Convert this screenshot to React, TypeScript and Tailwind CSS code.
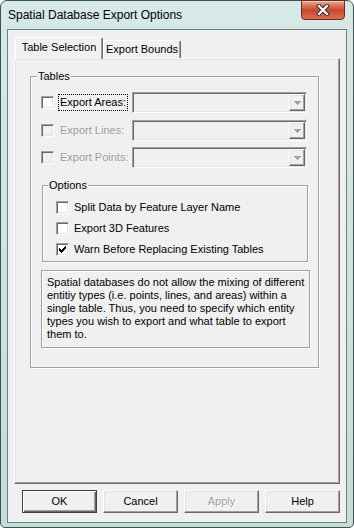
import React from 'react';

const raised =
  'border border-t-white border-l-white border-r-[#696969] border-b-[#696969] shadow-[inset_-1px_-1px_0_#a0a0a0,inset_1px_1px_0_#e3e3e3]';
const sunken =
  'border border-t-[#a0a0a0] border-l-[#a0a0a0] border-r-white border-b-white shadow-[inset_1px_1px_0_#696969,inset_-1px_-1px_0_#e3e3e3]';
const etched = 'border border-[#a0a0a0] shadow-[inset_1px_1px_0_#fff,1px_1px_0_#fff]';

function CheckBox({ checked = false, disabled = false }: { checked?: boolean; disabled?: boolean }) {
  return (
    <span
      className={`flex h-[13px] w-[13px] shrink-0 items-center justify-center ${sunken} ${
        disabled ? 'bg-[#f0f0f0]' : 'bg-white'
      }`}
    >
      {checked && (
        <svg width="7" height="7" viewBox="0 0 7 7" shapeRendering="crispEdges">
          <path
            fill="#000"
            d="M6 0h1v1h-1z M5 1h2v1h-2z M0 2h1v1h-1z M4 2h3v1h-3z M0 3h2v1h-2z M3 3h3v1h-3z M0 4h5v1h-5z M1 5h3v1h-3z M2 6h1v1h-1z"
          />
        </svg>
      )}
    </span>
  );
}

function Combo() {
  return (
    <div className={`flex h-[21px] w-[175px] shrink-0 justify-end bg-[#f0f0f0] p-px ${sunken}`}>
      <div className={`flex h-full w-[16px] items-center justify-center bg-[#f0f0f0] ${raised}`}>
        <svg width="7" height="4" viewBox="0 0 7 4" shapeRendering="crispEdges">
          <path fill="#a0a0a0" d="M0 0h7v1H0z M1 1h5v1H1z M2 2h3v1H2z M3 3h1v1H3z" />
        </svg>
      </div>
    </div>
  );
}

function TableRow({ label, enabled, focused }: { label: string; enabled: boolean; focused?: boolean }) {
  return (
    <div className="flex h-[21px] items-center">
      <div className="flex w-[101px] shrink-0 items-center pl-[10px]">
        <CheckBox disabled={!enabled} />
        <span
          className={`ml-[4px] flex h-[17px] items-center whitespace-nowrap px-[1px] ${
            focused ? 'border border-dotted border-black' : 'border border-transparent'
          } ${enabled ? 'text-black' : 'text-[#a0a0a0]'}`}
        >
          {label}
        </span>
      </div>
      <Combo />
    </div>
  );
}

function OptionRow({ label, checked }: { label: string; checked?: boolean }) {
  return (
    <div className="flex h-[17px] items-center pl-[13px]">
      <CheckBox checked={checked} />
      <span className="ml-[5px] whitespace-nowrap">{label}</span>
    </div>
  );
}

function Button({ label, primary, disabled }: { label: string; primary?: boolean; disabled?: boolean }) {
  return (
    <button
      className={`flex h-[23px] w-[75px] items-center justify-center bg-[#f0f0f0] ${
        primary
          ? 'border border-[#404040] shadow-[inset_1px_1px_0_#fff,inset_-1px_-1px_0_#696969,inset_-2px_-2px_0_#a0a0a0]'
          : raised
      } ${disabled ? 'text-[#a0a0a0] [text-shadow:1px_1px_0_#fff]' : 'text-black'}`}
    >
      {label}
    </button>
  );
}

export default function App() {
  return (
    <div className="h-[528px] w-[354px] overflow-hidden bg-white">
      <div className="flex h-[528px] w-[354px] flex-col rounded-t-[7px] rounded-b-[5px] border border-[#3f5058] bg-linear-to-b from-[#d6e9e6] via-[#cfe3df] to-[#c6dcd6] font-['Liberation_Sans',Arial,sans-serif] text-[11px] leading-[13px]">
        <div className="flex h-[28px] shrink-0 items-start justify-between pl-[7px] pr-[8px]">
          <span className="mt-[7px] text-[12px] leading-[15px] text-black">Spatial Database Export Options</span>
          <div className="-mt-px flex h-[20px] w-[44px] items-center justify-center rounded-b-[4px] border border-[#6e2a1c] bg-linear-to-b from-[#e8a894] via-[#c8462c] to-[#d9704f] shadow-[inset_0_1px_0_#f4c9bb]">
            <svg width="14" height="12" viewBox="0 0 14 12">
              <path d="M3 2l8 8M11 2l-8 8" stroke="#3a2e2e" strokeWidth="4.2" strokeLinecap="square" />
              <path d="M3 2l8 8M11 2l-8 8" stroke="#fff" strokeWidth="2.2" strokeLinecap="square" />
            </svg>
          </div>
        </div>

        <div className="mx-[6px] flex h-[494px] flex-col border border-[#6d8080] bg-[#f0f0f0]">
          <div className="ml-[6px] mt-[7px] flex h-[21px] items-end pl-px">
            <div className="relative z-10 -mb-px flex h-[22px] w-[88px] items-start justify-center rounded-t-[2px] border-l border-t border-r border-l-white border-t-white border-r-[#696969] bg-[#f0f0f0] pt-[3px] shadow-[inset_-1px_0_0_#a0a0a0]">
              Table Selection
            </div>
            <div className="flex h-[18px] w-[78px] items-start justify-center rounded-t-[2px] border-l border-t border-r border-l-white border-t-white border-r-[#696969] pt-[2px] shadow-[inset_-1px_0_0_#a0a0a0]">
              Export Bounds
            </div>
          </div>

          <div className={`ml-[6px] h-[426px] w-[326px] ${raised}`}>
            <div className={`relative ml-[15px] mt-[17px] h-[292px] w-[289px] ${etched}`}>
              <span className="absolute -top-[7px] left-[6px] bg-[#f0f0f0] px-px">Tables</span>
              <div className="mt-[15px] flex flex-col">
                <TableRow label="Export Areas:" enabled focused />
                <div className="mt-[7px]">
                  <TableRow label="Export Lines:" enabled={false} />
                </div>
                <div className="mt-[6px]">
                  <TableRow label="Export Points:" enabled={false} />
                </div>
              </div>

              <div className={`relative ml-[11px] mt-[17px] h-[77px] w-[266px] ${etched}`}>
                <span className="absolute -top-[7px] left-[5px] bg-[#f0f0f0] px-px">Options</span>
                <div className="mt-[13px] flex flex-col gap-[4px]">
                  <OptionRow label="Split Data by Feature Layer Name" />
                  <OptionRow label="Export 3D Features" />
                  <OptionRow label="Warn Before Replacing Existing Tables" checked />
                </div>
              </div>

              <div className={`ml-[10px] mt-[8px] h-[78px] w-[269px] pl-[5px] pt-[5px] ${etched}`}>
                <p>
                  Spatial databases do not allow the mixing of different
                  <br />
                  entitiy types (i.e. points, lines, and areas) within a
                  <br />
                  single table. Thus, you need to specify which entity
                  <br />
                  types you wish to export and what table to export
                  <br />
                  them to.
                </p>
              </div>
            </div>
          </div>

          <div className="ml-[14px] mt-[6px] flex gap-[6px]">
            <Button label="OK" primary />
            <Button label="Cancel" />
            <Button label="Apply" disabled />
            <Button label="Help" />
          </div>
        </div>
      </div>
    </div>
  );
}
